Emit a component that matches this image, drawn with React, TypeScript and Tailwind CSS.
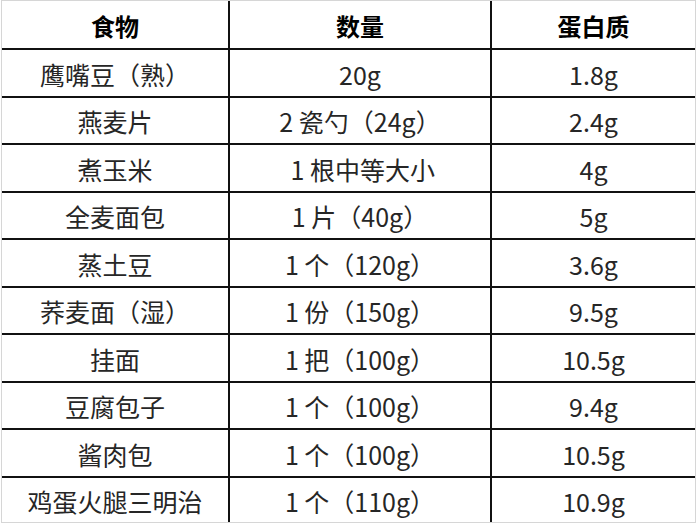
const rows: [string, string, string][] = [
  ["鹰嘴豆（熟）", "20g", "1.8g"],
  ["燕麦片", "2 瓷勺（24g）", "2.4g"],
  ["煮玉米", "\u00a01 根中等大小", "4g"],
  ["全麦面包", "1 片（40g）", "5g"],
  ["蒸土豆", "1 个（120g）", "3.6g"],
  ["荞麦面（湿）", "1 份（150g）", "9.5g"],
  ["挂面", "1 把（100g）", "10.5g"],
  ["豆腐包子", "1 个（100g）", "9.4g"],
  ["酱肉包", "1 个（100g）", "10.5g"],
  ["鸡蛋火腿三明治", "1 个（110g）", "10.9g"],
];

function Row({ cells, header, last }: { cells: [string, string, string]; header?: boolean; last?: boolean }) {
  const text = header ? "font-bold text-black text-[24px]" : "text-[#262626] text-[25px]";
  return (
    <div
      className={`flex ${header ? "h-[49px]" : last ? "flex-1" : "h-[47.5px]"} ${last ? "" : "border-b-2 border-[#111]"} ${text}`}
    >
      <div className="w-[228px] border-r-2 border-[#111] flex items-center justify-center pt-[3px]">{cells[0]}</div>
      <div className="w-[262px] border-r-2 border-[#111] flex items-center justify-center pt-[3px] whitespace-pre">{cells[1]}</div>
      <div className="flex-1 flex items-center justify-center pt-[3px]">{cells[2]}</div>
    </div>
  );
}

export default function App() {
  return (
    <div className="w-[700px] h-[527px] bg-white">
      <div
        className="ml-[1px] w-[695px] h-[523px] border border-[#d6d6d6] flex flex-col leading-none"
        style={{ fontFamily: '"Noto Sans CJK SC", "Noto Sans", sans-serif' }}
      >
        <Row cells={["食物", "数量", "蛋白质"]} header />
        {rows.map((r, i) => (
          <Row key={i} cells={r} last={i === rows.length - 1} />
        ))}
      </div>
    </div>
  );
}
